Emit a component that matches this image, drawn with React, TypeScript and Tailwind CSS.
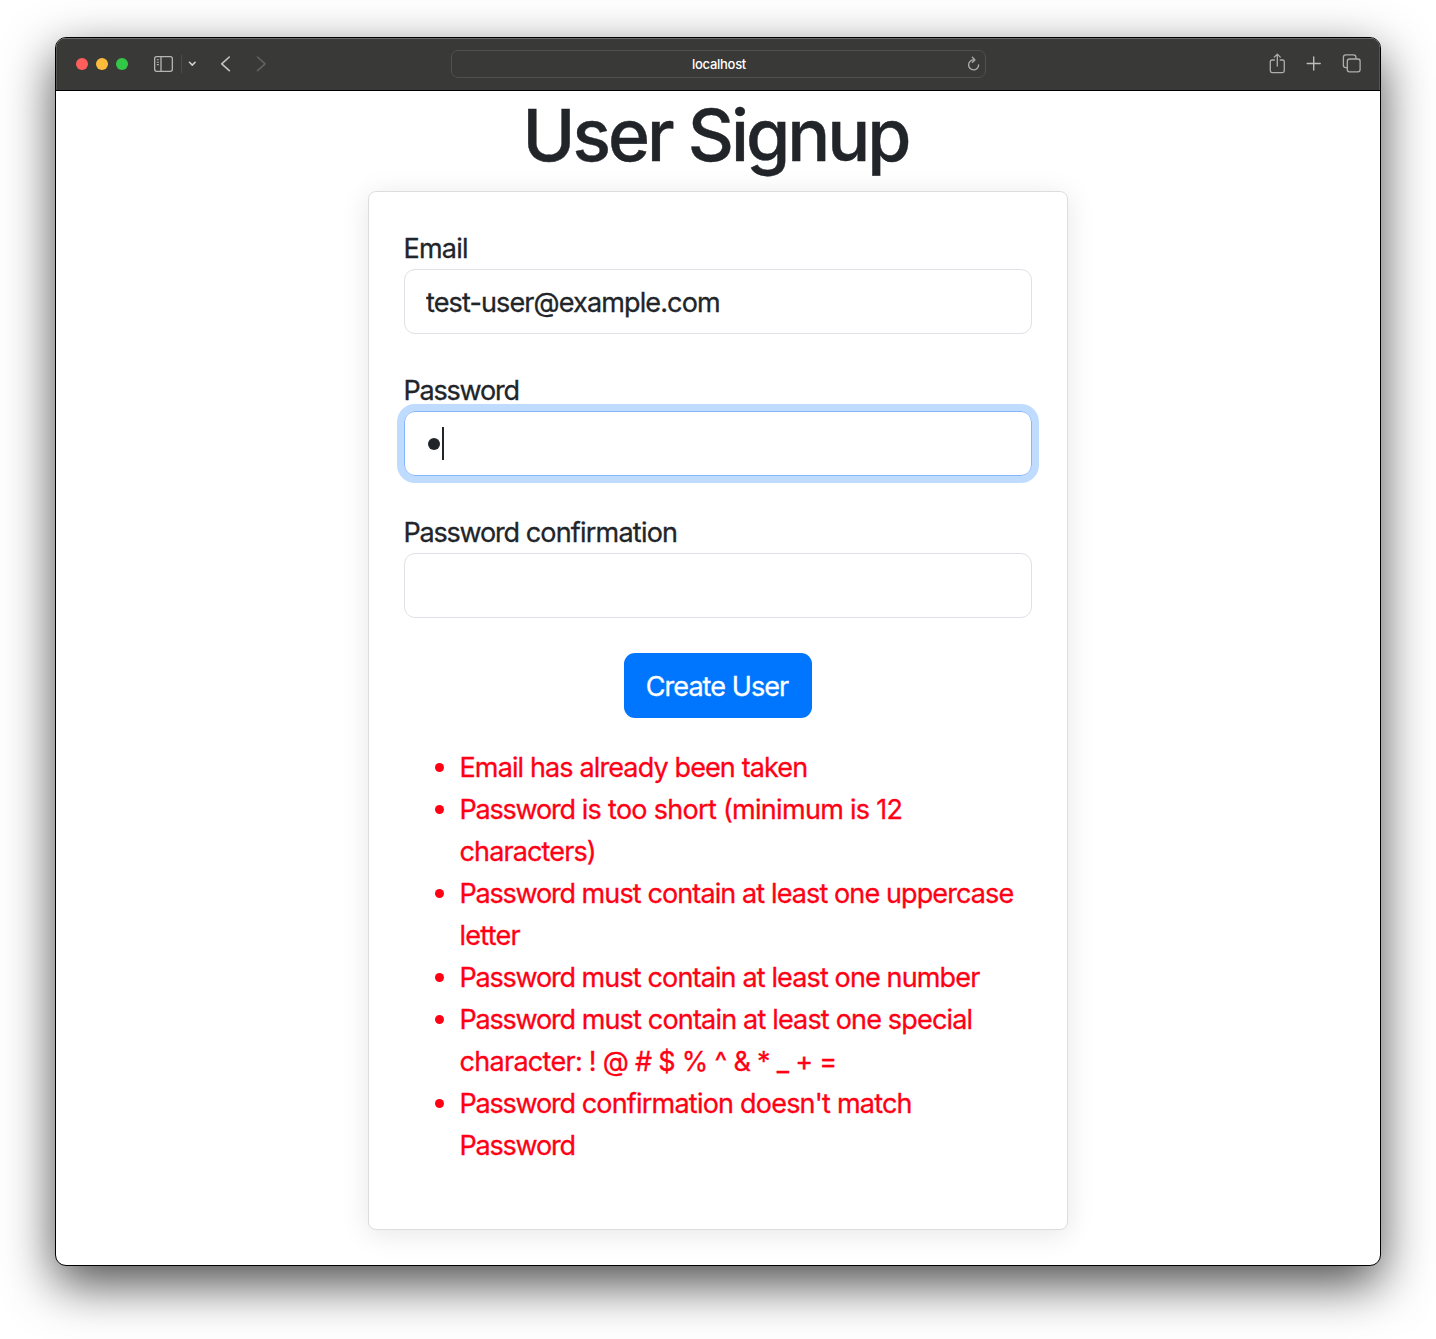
import React from "react";

const errors: { text: string; tracking: string }[][] = [
  [{ text: "Email has already been taken", tracking: "tracking-[-0.874px]" }],
  [
    { text: "Password is too short (minimum is 12", tracking: "tracking-[-0.704px]" },
    { text: "characters)", tracking: "tracking-[-0.87px]" },
  ],
  [
    { text: "Password must contain at least one uppercase", tracking: "tracking-[-0.889px]" },
    { text: "letter", tracking: "tracking-[-0.75px]" },
  ],
  [{ text: "Password must contain at least one number", tracking: "tracking-[-0.865px]" }],
  [
    { text: "Password must contain at least one special", tracking: "tracking-[-0.82px]" },
    { text: "character: ! @ # $ % ^ & * _ + =", tracking: "tracking-[-0.71px]" },
  ],
  [
    { text: "Password confirmation doesn't match", tracking: "tracking-[-0.788px]" },
    { text: "Password", tracking: "tracking-[-1.2px]" },
  ],
];

/* The word "Password" is set tighter than the words that follow it. */
function Line({ text }: { text: string }) {
  if (!text.startsWith("Password")) return <>{text}</>;
  return (
    <>
      <span className="tracking-[-1.2px]">Password</span>
      {text.slice(8)}
    </>
  );
}

function Toolbar() {
  return (
    <header className="flex h-[53px] items-center border-b border-black bg-[#393937] pl-5 pr-[19px] shadow-[inset_0_1px_0_#6b6b6b,inset_1px_0_0_#555,inset_-1px_0_0_#555]">
      <div className="flex flex-1 items-center">
        <div className="flex gap-2">
          <span className="size-3 rounded-full bg-[#ff5f5a]" />
          <span className="size-3 rounded-full bg-[#ffbb3b]" />
          <span className="size-3 rounded-full bg-[#33c748]" />
        </div>
        <svg className="ml-[26px]" width="19" height="16" viewBox="0 0 19 16" fill="none" stroke="#b5b5b3" strokeWidth="1.3">
          <rect x="0.65" y="0.65" width="17.7" height="14.7" rx="2" />
          <path d="M7 0.7v14.6" />
          <path d="M2.8 3.8h2M2.8 6.2h2M2.8 8.6h2" strokeWidth="1.1" />
        </svg>
        <span className="ml-2 h-[18px] w-px bg-[#4c4c4a]" />
        <svg className="ml-[6px]" width="8" height="6" viewBox="0 0 8 6" fill="none" stroke="#d0d0ce" strokeWidth="1.6" strokeLinecap="round" strokeLinejoin="round">
          <path d="M1.5 1.3 4.3 4.1 7.1 1.3" />
        </svg>
        <svg className="ml-6" width="11" height="16" viewBox="0 0 11 16" fill="none" stroke="#c4c4c2" strokeWidth="1.6" strokeLinecap="round" strokeLinejoin="round">
          <path d="M9.3 1 1.7 7.8 9.3 14.6" />
        </svg>
        <svg className="ml-[25px]" width="11" height="16" viewBox="0 0 11 16" fill="none" stroke="#62625f" strokeWidth="1.6" strokeLinecap="round" strokeLinejoin="round">
          <path d="M1.5 1 9.1 7.8 1.5 14.6" />
        </svg>
      </div>
      <div className="flex h-7 w-[535px] items-center rounded-[7px] border border-[#50504e] pr-[5px]">
        <span className="flex-1 pl-[19px] text-center text-[13px] font-medium tracking-[-0.28px] text-white">localhost</span>
        <svg width="13" height="16" viewBox="0 0 13 16" fill="none" stroke="#aaaaa8" strokeWidth="1.4" strokeLinecap="round" strokeLinejoin="round">
          <path d="M6.9 3.9A5 5 0 1 0 11.6 8.9" />
          <path d="M5.4 1.3 7.9 3.9 5.4 6.3" />
        </svg>
      </div>
      <div className="flex flex-1 items-center justify-end">
        <svg className="mb-0.5" width="16" height="21" viewBox="0 0 16 21" fill="none" stroke="#aeaeac" strokeWidth="1.3" strokeLinecap="round" strokeLinejoin="round">
          <path d="M5.4 7H3.1Q1.3 7 1.3 8.8v9Q1.3 19.6 3.1 19.6h10.4q1.8 0 1.8-1.8v-9Q15.3 7 13.5 7h-2.3" />
          <path d="M8.3 13V1.2M5.3 4.1 8.3 1.1l3 3" />
        </svg>
        <svg className="mb-px ml-[21px]" width="15" height="15" viewBox="0 0 15 15" fill="none" stroke="#bcbcba" strokeWidth="1.4" strokeLinecap="round">
          <path d="M7.7 1v13M1.2 7.5h13" />
        </svg>
        <svg className="mb-0.5 ml-[21px]" width="19" height="19" viewBox="0 0 19 19" fill="none" stroke="#aeaeac" strokeWidth="1.3">
          <rect x="5.3" y="5" width="12.8" height="12.8" rx="2.2" />
          <path d="M5.3 13.6H3.7Q1.4 13.6 1.4 11.3V3.2Q1.4.9 3.7.9h7.9q2.3 0 2.3 2.3V5" />
        </svg>
      </div>
    </header>
  );
}

export default function App() {
  return (
    <div className="h-[1339px] w-[1436px] overflow-hidden bg-white px-[55px] pt-[37px] font-['Inter',sans-serif] text-[27px] leading-[42px] text-[#212529]">
      <div className="h-[1229px] w-[1326px] overflow-hidden rounded-[11px] border border-black bg-white shadow-[0_18px_50px_rgba(0,0,0,0.7)]">
        <Toolbar />
        <main className="flex flex-col items-center pt-[2px]">
          <h1 className="mb-[14px] pr-[5px] text-[71.5px] leading-[84px] font-medium tracking-[-3px] [-webkit-text-stroke:0.4px]">User Signup</h1>
          <form className="h-[1039px] w-[700px] rounded-[8px] border border-[#dcdddd] bg-white p-[35px] shadow-[0_4px_28px_rgba(0,0,0,0.1)] [-webkit-text-stroke:0.3px]">
            <div className="mb-[35px]">
              <label className="-ml-[0.5px] block h-[42px] pt-px tracking-[-0.77px]">Email</label>
              <input
                className="block h-[65px] w-full rounded-[11px] border border-[#dee2e6] px-[21px] pt-[2px] tracking-[-0.87px]"
                defaultValue="test-user@example.com"
              />
            </div>
            <div className="mb-[35px]">
              <label className="-ml-[0.5px] block h-[42px] pt-px tracking-[-1.2px]">Password</label>
              <div className="flex h-[65px] items-center gap-[2px] rounded-[11px] border border-[#86b7fe] pl-[23px] shadow-[0_0_0_7px_#bfdcff]">
                <span className="size-3 rounded-full bg-[#212529]" />
                <span className="h-[33px] w-[2px] bg-[#212529]" />
              </div>
            </div>
            <div className="mb-[35px]">
              <label className="-ml-[0.5px] block h-[42px] pt-px tracking-[-0.79px]">
                <Line text="Password confirmation" />
              </label>
              <input className="block h-[65px] w-full rounded-[11px] border border-[#dee2e6] px-[21px]" />
            </div>
            <button type="button" className="mx-auto block h-[65px] w-[188px] rounded-[11px] bg-[#0076ff] pt-[2px] pr-[2px] tracking-[-0.93px] text-white">
              Create User
            </button>
            <ul className="mt-[29px] pl-[31px] text-[#ff0015]">
              {errors.map((lines) => (
                <li key={lines[0].text} className="flex">
                  <span className="mt-4 mr-[15.5px] size-[9px] shrink-0 rounded-full bg-[#ff0015]" />
                  <div>
                    {lines.map((line) => (
                      <span key={line.text} className={`block whitespace-nowrap ${line.tracking}`}>
                        <Line text={line.text} />
                      </span>
                    ))}
                  </div>
                </li>
              ))}
            </ul>
          </form>
        </main>
      </div>
    </div>
  );
}
